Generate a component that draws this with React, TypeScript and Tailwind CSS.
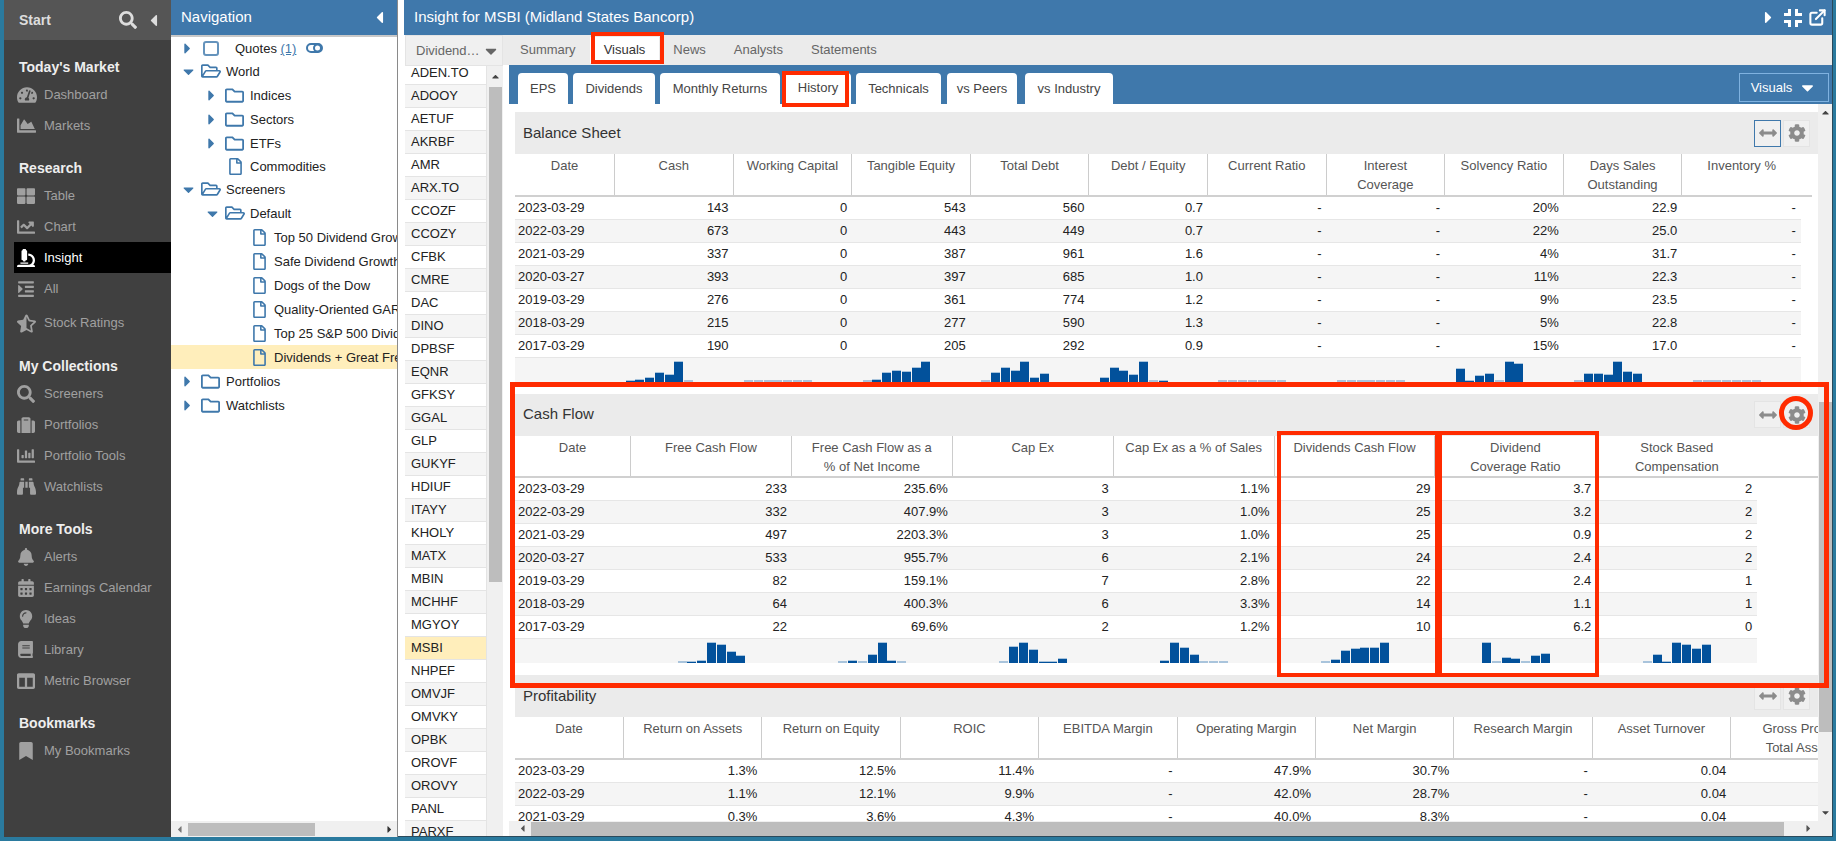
import type { ReactNode } from 'react'
import {
  FaTachometerAlt, FaChartArea, FaThLarge, FaChartLine, FaMicroscope, FaIndent, FaStarHalfAlt,
  FaSearch, FaSuitcase, FaChartBar, FaBinoculars, FaBell, FaCalendarAlt, FaLightbulb, FaBook,
  FaColumns, FaBookmark, FaCaretRight, FaCaretDown, FaCaretUp, FaCaretLeft, FaRegFolder,
  FaRegFolderOpen, FaRegFile, FaCog, FaArrowsAltH,
} from 'react-icons/fa'
import { ExternalLink } from 'lucide-react'

const menu = [
  { title: "Today's Market", cls: 'mt-[15px]', items: [
    { label: 'Dashboard', icon: <FaTachometerAlt size={20} /> },
    { label: 'Markets', icon: <FaChartArea size={19} /> },
  ] },
  { title: 'Research', cls: 'mt-[15px]', items: [
    { label: 'Table', icon: <FaThLarge size={18} /> },
    { label: 'Chart', icon: <FaChartLine size={18} /> },
    { label: 'Insight', icon: <FaMicroscope size={18} />, active: true },
    { label: 'All', icon: <FaIndent size={18} /> },
    { label: 'Stock Ratings', icon: <FaStarHalfAlt size={19} />, tall: true },
  ] },
  { title: 'My Collections', cls: 'mt-[12px]', items: [
    { label: 'Screeners', icon: <FaSearch size={18} /> },
    { label: 'Portfolios', icon: <FaSuitcase size={18} /> },
    { label: 'Portfolio Tools', icon: <FaChartBar size={18} /> },
    { label: 'Watchlists', icon: <FaBinoculars size={19} /> },
  ] },
  { title: 'More Tools', cls: 'mt-[15px]', items: [
    { label: 'Alerts', icon: <FaBell size={18} /> },
    { label: 'Earnings Calendar', icon: <FaCalendarAlt size={18} /> },
    { label: 'Ideas', icon: <FaLightbulb size={18} /> },
    { label: 'Library', icon: <FaBook size={17} /> },
    { label: 'Metric Browser', icon: <FaColumns size={18} /> },
  ] },
  { title: 'Bookmarks', cls: 'mt-[15px]', items: [
    { label: 'My Bookmarks', icon: <FaBookmark size={18} /> },
  ] },
]

const tickers = [
  'ADEN.TO', 'ADOOY', 'AETUF', 'AKRBF', 'AMR', 'ARX.TO', 'CCOZF', 'CCOZY', 'CFBK', 'CMRE', 'DAC', 'DINO',
  'DPBSF', 'EQNR', 'GFKSY', 'GGAL', 'GLP', 'GUKYF', 'HDIUF', 'ITAYY', 'KHOLY', 'MATX', 'MBIN', 'MCHHF',
  'MGYOY', 'MSBI', 'NHPEF', 'OMVJF', 'OMVKY', 'OPBK', 'OROVF', 'OROVY', 'PANL', 'PARXF',
]

const balance = {
  cols: ['Date', 'Cash', 'Working Capital', 'Tangible Equity', 'Total Debt', 'Debt / Equity', 'Current Ratio', 'Interest\nCoverage', 'Solvency Ratio', 'Days Sales\nOutstanding', 'Inventory %'],
  rows: [
    ['2023-03-29', '143', '0', '543', '560', '0.7', '-', '-', '20%', '22.9', '-'],
    ['2022-03-29', '673', '0', '443', '449', '0.7', '-', '-', '22%', '25.0', '-'],
    ['2021-03-29', '337', '0', '387', '961', '1.6', '-', '-', '4%', '31.7', '-'],
    ['2020-03-27', '393', '0', '397', '685', '1.0', '-', '-', '11%', '22.3', '-'],
    ['2019-03-29', '276', '0', '361', '774', '1.2', '-', '-', '9%', '23.5', '-'],
    ['2018-03-29', '215', '0', '277', '590', '1.3', '-', '-', '5%', '22.8', '-'],
    ['2017-03-29', '190', '0', '205', '292', '0.9', '-', '-', '15%', '17.0', '-'],
  ],
  sparks: [
    [2, 3, 5, 10, 8, 21, 1],
    [1, 1, 1, 1, 1, 1, 1],
    [1, 3, 10, 12, 11, 15, 21],
    [1, 10, 15, 12, 21, 5, 9],
    [5, 15, 12, 8, 21, 1, 2],
    [1, 1, 1, 1, 1, 1, 1],
    [1, 1, 1, 1, 1, 1, 1],
    [14, 2, 7, 9, 1, 21, 19],
    [1, 9, 9, 8, 21, 11, 9],
    [1, 1, 1, 1, 1, 1, 1],
  ],
}

const cashFlow = {
  cols: ['Date', 'Free Cash Flow', 'Free Cash Flow as a\n% of Net Income', 'Cap Ex', 'Cap Ex as a % of Sales', 'Dividends Cash Flow', 'Dividend\nCoverage Ratio', 'Stock Based\nCompensation'],
  rows: [
    ['2023-03-29', '233', '235.6%', '3', '1.1%', '29', '3.7', '2'],
    ['2022-03-29', '332', '407.9%', '3', '1.0%', '25', '3.2', '2'],
    ['2021-03-29', '497', '2203.3%', '3', '1.0%', '25', '0.9', '2'],
    ['2020-03-27', '533', '955.7%', '6', '2.1%', '24', '2.4', '2'],
    ['2019-03-29', '82', '159.1%', '7', '2.8%', '22', '2.4', '1'],
    ['2018-03-29', '64', '400.3%', '6', '3.3%', '14', '1.1', '1'],
    ['2017-03-29', '22', '69.6%', '2', '1.2%', '10', '6.2', '0'],
  ],
  sparks: [
    [1, 2, 3, 21, 19, 12, 8],
    [1, 3, 1, 9, 21, 3, 1],
    [1, 17, 21, 14, 2, 2, 5],
    [3, 21, 16, 9, 1, 1, 1],
    [1, 4, 13, 15, 16, 16, 21],
    [21, 1, 6, 5, 1, 8, 10],
    [1, 9, 2, 21, 19, 15, 19],
  ],
}

const profitability = {
  cols: ['Date', 'Return on Assets', 'Return on Equity', 'ROIC', 'EBITDA Margin', 'Operating Margin', 'Net Margin', 'Research Margin', 'Asset Turnover', 'Gross Profit /\nTotal Assets'],
  rows: [
    ['2023-03-29', '1.3%', '12.5%', '11.4%', '-', '47.9%', '30.7%', '-', '0.04', ''],
    ['2022-03-29', '1.1%', '12.1%', '9.9%', '-', '42.0%', '28.7%', '-', '0.04', ''],
    ['2021-03-29', '0.3%', '3.6%', '4.3%', '-', '40.0%', '8.3%', '-', '0.04', ''],
  ],
  sparks: [],
}

function Spark({ bars, cls }: { bars: number[]; cls: string }) {
  return (
    <div className={`flex h-full items-end gap-[0.8px] ${cls}`}>
      {bars.map((h, i) =>
        h <= 1 ? (
          <div key={i} className="h-[2px] w-[9px] shrink-0 bg-[#a9c4dc]" />
        ) : (
          <div key={i} className="w-[9px] shrink-0 border-t border-[#a9c4dc] bg-[#02519b]" style={{ height: h }} />
        ),
      )}
    </div>
  )
}

type SectionProps = {
  title: string
  data: { cols: string[]; rows: string[][]; sparks: number[][] }
  dateW: string
  colW: string
  headW: string
  sparkCls: string
  activeArrow?: boolean
}

function Section({ title, data, dateW, colW, headW, sparkCls, activeArrow }: SectionProps) {
  return (
    <section className="mb-[12px] w-[1303px] overflow-hidden">
      <div className="flex h-[42px] items-center justify-between bg-[#ebebeb] pl-[8px] pr-[8px]">
        <span className="text-[15px] text-[#333]">{title}</span>
        <div className="flex gap-[2px]">
          <button className={`flex h-[27px] w-[27px] items-center justify-center border bg-[#f0f0f0] text-[#8c8c8c] ${activeArrow ? 'border-[#3f78ab]' : 'border-[#e4e4e4]'}`}>
            <FaArrowsAltH size={18} />
          </button>
          <button className="flex h-[27px] w-[27px] items-center justify-center border border-[#e4e4e4] bg-[#f0f0f0] text-[#8c8c8c]">
            <FaCog size={18} />
          </button>
        </div>
      </div>
      <div className={`flex h-[42.5px] border-b-2 border-[#d0d0d0] ${headW}`}>
        {data.cols.map((c, i) => (
          <div key={c} className={`shrink-0 whitespace-pre border-r border-[#ccc] pt-[2px] text-center leading-[19px] text-[#555] last:border-r-0 ${i === 0 ? dateW : colW}`}>
            {c}
          </div>
        ))}
      </div>
      {data.rows.map((row, r) => (
        <div key={r} className={`flex h-[23px] w-fit border-b border-[#e6e6e6] leading-[22px] text-[#222] ${r % 2 ? 'bg-[#f5f5f5]' : 'bg-white'}`}>
          {row.map((v, i) =>
            i === 0 ? (
              <div key={i} className={`shrink-0 pl-[3px] ${dateW}`}>{v}</div>
            ) : (
              <div key={i} className={`shrink-0 pr-[5px] text-right ${colW}`}>{v}</div>
            ),
          )}
        </div>
      ))}
      {data.sparks.length > 0 && (
        <div className="flex h-[24px] w-fit bg-[#f5f5f5] pt-[3px]">
          <div className={`shrink-0 ${dateW}`} />
          {data.sparks.map((s, i) => (
            <div key={i} className={`shrink-0 ${colW}`}>
              <Spark bars={s} cls={sparkCls} />
            </div>
          ))}
        </div>
      )}
    </section>
  )
}

function TreeRow({ depth, open, caret, file, label, selected, short }: { depth: 0 | 1 | 2; open?: boolean; caret?: boolean; file?: boolean; label: ReactNode; selected?: boolean; short?: boolean }) {
  const pad = depth === 0 ? 'pl-[12px]' : depth === 1 ? 'pl-[36px]' : 'pl-[60px]'
  return (
    <div className={`flex items-center whitespace-nowrap ${short ? 'h-[22px]' : 'h-[24px]'} ${pad} ${selected ? 'bg-[#ffeebb]' : ''}`}>
      <span className="flex w-[18px] shrink-0 text-[#3f78ab]">
        {caret && (open ? <FaCaretDown size={17} className="-ml-[3px]" /> : <FaCaretRight size={17} className="-ml-[4px]" />)}
      </span>
      <span className="w-[25px] shrink-0 text-[#3f78ab]">
        {file ? <FaRegFile size={17} className="ml-[2px]" /> : open ? <FaRegFolderOpen size={20} /> : <FaRegFolder size={19} />}
      </span>
      <span className="pt-[1px] text-[#222]">{label}</span>
    </div>
  )
}

export default function App() {
  return (
    <div className="relative flex h-[841px] w-[1836px] overflow-hidden bg-[#2a7a9e] pb-[4px] pl-[4px] pr-[3px] font-['Liberation_Sans',sans-serif] text-[13px]">
      {/* start menu */}
      <aside className="w-[167px] shrink-0 bg-[#404040]">
        <div className="flex h-[40px] items-center justify-between bg-[#555] pl-[15px] pr-[8px] text-[#ddd]">
          <span className="text-[14px] font-bold">Start</span>
          <div className="flex items-center gap-[7px]">
            <FaSearch size={18} />
            <FaCaretLeft size={19} />
          </div>
        </div>
        {menu.map((g) => (
          <div key={g.title} className={g.cls}>
            <div className="flex h-[24px] items-center pl-[15px] text-[14px] font-bold text-[#eee]">{g.title}</div>
            {g.items.map((it) => (
              <div key={it.label} className={`ml-[10px] flex items-center pl-[3px] ${it.tall ? 'h-[38px]' : 'h-[31px]'} ${it.active ? 'bg-black text-white' : 'text-[#a0a0a0]'}`}>
                <span className="flex w-[27px] shrink-0">{it.icon}</span>
                <span className="whitespace-nowrap">{it.label}</span>
              </div>
            ))}
          </div>
        ))}
      </aside>

      {/* navigation tree */}
      <div className="flex w-[227px] shrink-0 flex-col border-r border-[#8a8a8a] bg-white">
        <div className="flex h-[37px] shrink-0 items-center justify-between border-b-2 border-[#c8c8c8] bg-[#3f78ab] pl-[10px] pr-[8px] text-white">
          <span className="text-[15px]">Navigation</span>
          <FaCaretLeft size={19} />
        </div>
        <div className="min-h-0 flex-1 overflow-hidden">
          <div className="flex h-[22px] items-center whitespace-nowrap pl-[12px]">
            <span className="flex w-[20px] shrink-0 text-[#3f78ab]"><FaCaretRight size={17} className="-ml-[4px]" /></span>
            <span className="h-[15px] w-[16px] shrink-0 rounded-[3px] border-2 border-[#3f78ab] opacity-80" />
            <span className="ml-[16px] pt-[2px] text-[#222]">Quotes <span className="text-[#3f78ab] underline">(1)</span></span>
            <svg viewBox="0 0 17 10" className="ml-[10px] h-[10px] w-[17px] text-[#3f78ab]" fill="none" stroke="currentColor" strokeWidth="2">
              <rect x="1" y="1" width="15" height="8" rx="4" />
              <circle cx="11.5" cy="5" r="3.5" />
            </svg>
          </div>
          <TreeRow depth={0} open caret label="World" />
          <TreeRow depth={1} caret label="Indices" />
          <TreeRow depth={1} caret label="Sectors" />
          <TreeRow depth={1} caret label="ETFs" />
          <TreeRow depth={1} file short label="Commodities" />
          <TreeRow depth={0} open caret label="Screeners" />
          <TreeRow depth={1} open caret label="Default" />
          <TreeRow depth={2} file label="Top 50 Dividend Growth" />
          <TreeRow depth={2} file label="Safe Dividend Growth" />
          <TreeRow depth={2} file label="Dogs of the Dow" />
          <TreeRow depth={2} file label="Quality-Oriented GARP" />
          <TreeRow depth={2} file label="Top 25 S&P 500 Dividend" />
          <TreeRow depth={2} file selected label="Dividends + Great Free Cash Flow" />
          <TreeRow depth={0} caret label="Portfolios" />
          <TreeRow depth={0} caret label="Watchlists" />
        </div>
        <div className="flex h-[16px] shrink-0 items-center bg-[#f0f0f0] text-[#777]">
          <FaCaretLeft size={11} className="ml-[3px] shrink-0" />
          <div className="ml-[3px] h-[13px] w-[127px] bg-[#bdbdbd]" />
          <FaCaretRight size={11} className="ml-auto mr-[2px] shrink-0 text-[#333]" />
        </div>
      </div>

      {/* insight panel */}
      <main className="flex min-w-0 flex-1 flex-col border-b border-r border-[#2b4a5c] bg-white pl-[6px]">
        <header className="flex h-[35px] shrink-0 items-center justify-between bg-[#3f78ab] pl-[10px] pr-[5px] text-white">
          <span className="text-[15px]">Insight for MSBI (Midland States Bancorp)</span>
          <div className="flex items-center gap-[6px]">
            <FaCaretRight size={19} />
            <svg viewBox="0 0 18 18" className="h-[18px] w-[18px]" fill="none" stroke="currentColor" strokeWidth="3">
              <path d="M5.5 0v5.5H0M12.5 0v5.5H18M0 12.5h5.5V18M18 12.5h-5.5V18" />
            </svg>
            <ExternalLink size={19} strokeWidth={2.6} />
          </div>
        </header>
        <div className="flex min-h-0 flex-1">
          {/* ticker list */}
          <div className="ml-[1px] flex w-[98px] shrink-0 flex-col">
            <div className="flex h-[31px] shrink-0 items-center justify-between border border-[#e4e4e4] bg-[#f0f0f0] pl-[10px] pr-[2px] text-[#666]">
              <span>Dividend…</span>
              <FaCaretDown size={18} />
            </div>
            <div className="flex min-h-0 flex-1">
              <div className="w-[82px] shrink-0 overflow-hidden bg-white">
                <div className="-mt-[4px]">
                  {tickers.map((t, i) => (
                    <div key={t} className={`h-[23px] border-b border-r border-[#e4e4e4] pl-[6px] leading-[22px] text-[#222] ${t === 'MSBI' ? 'bg-[#ffeebb]' : i % 2 ? 'bg-[#f5f5f5]' : 'bg-white'}`}>
                      {t}
                    </div>
                  ))}
                </div>
              </div>
              <div className="flex w-[16px] flex-col items-center bg-[#f0f0f0] text-[#444]">
                <FaCaretUp size={11} className="mt-[5px] shrink-0" />
                <div className="mt-[5px] h-[495px] w-[13px] bg-[#bdbdbd]" />
              </div>
            </div>
          </div>

          <div className="flex min-w-0 flex-1 flex-col">
            <div className="flex h-[30px] shrink-0 items-center bg-[#ebebeb] pl-[3px] text-[#666]">
              <span className="px-[14px]">Summary</span>
              <span className="flex h-[26px] items-center bg-white px-[14px] text-[#333]">Visuals</span>
              <span className="px-[14px]">News</span>
              <span className="px-[14px]">Analysts</span>
              <span className="px-[14px]">Statements</span>
            </div>
            <div className="ml-[6px] flex min-h-0 flex-1 flex-col bg-white">
              <div className="flex h-[39px] shrink-0 items-end bg-[#3f78ab] pl-[9px] pr-[3px]">
                <div className="flex gap-[5px] text-[#444]">
                  <span className="flex h-[31px] w-[50px] items-center justify-center rounded-t-[4px] bg-white">EPS</span>
                  <span className="flex h-[31px] w-[82px] items-center justify-center rounded-t-[4px] bg-white">Dividends</span>
                  <span className="flex h-[31px] w-[120px] items-center justify-center rounded-t-[4px] bg-white">Monthly Returns</span>
                  <span className="flex h-[31px] w-[66px] items-center justify-center rounded-t-[4px] bg-white pb-[2px]">History</span>
                  <span className="flex h-[31px] w-[85px] items-center justify-center rounded-t-[4px] bg-white">Technicals</span>
                  <span className="ml-[1px] flex h-[31px] w-[70px] items-center justify-center rounded-t-[4px] bg-white">vs Peers</span>
                  <span className="ml-[3px] flex h-[31px] w-[88px] items-center justify-center rounded-t-[4px] bg-white">vs Industry</span>
                </div>
                <div className="mb-[2px] ml-auto flex h-[29px] w-[90px] items-center justify-center gap-[6px] border border-[#7fb2e0] text-white">
                  Visuals
                  <FaCaretDown size={19} />
                </div>
              </div>
              <div className="flex min-h-0 flex-1">
                <div className="min-w-0 flex-1 overflow-hidden pl-[6px] pt-[8px]">
                  <Section title="Balance Sheet" data={balance} dateW="w-[100px]" colW="w-[118.6px]" headW="w-[1297px]" sparkCls="pl-[10.5px]" activeArrow />
                  <Section title="Cash Flow" data={cashFlow} dateW="w-[116px]" colW="w-[160.9px]" headW="w-[1303px]" sparkCls="justify-center" />
                  <Section title="Profitability" data={profitability} dateW="w-[109px]" colW="w-[138.4px]" headW="w-[1303px]" sparkCls="justify-center" />
                </div>
                <div className="flex w-[14px] shrink-0 flex-col items-center bg-[#f0f0f0] text-[#444]">
                  <FaCaretUp size={11} className="mt-[3px] shrink-0" />
                  <div className="mt-[284px] h-[330px] w-[13px] shrink-0 bg-[#bdbdbd]" />
                  <FaCaretDown size={11} className="mt-[75px] shrink-0" />
                </div>
              </div>
              <div className="flex h-[15px] shrink-0 items-center bg-[#f0f0f0] text-[#555]">
                <FaCaretLeft size={11} className="ml-[8px] shrink-0" />
                <div className="ml-[3px] h-[14px] w-[1253px] shrink-0 bg-[#bdbdbd]" />
                <FaCaretRight size={11} className="ml-[19px] shrink-0" />
              </div>
            </div>
          </div>
        </div>
      </main>

      {/* red annotations drawn on top of the screenshot */}
      <div className="absolute left-[591px] top-[32px] h-[32px] w-[73px] border-4 border-[#ff2b00]" />
      <div className="absolute left-[782px] top-[71px] h-[36px] w-[67px] border-4 border-[#ff2b00]" />
      <div className="absolute left-[510px] top-[382px] h-[306px] w-[1319px] border-[5px] border-[#ff2b00]" />
      <div className="absolute left-[1277px] top-[431px] h-[246px] w-[162px] border-4 border-[#ff2b00]" />
      <div className="absolute left-[1438px] top-[431px] h-[246px] w-[161px] border-4 border-[#ff2b00]" />
      <div className="absolute left-[1779px] top-[396px] h-[34px] w-[34px] rounded-full border-[5px] border-[#ff2b00]" />
    </div>
  )
}
